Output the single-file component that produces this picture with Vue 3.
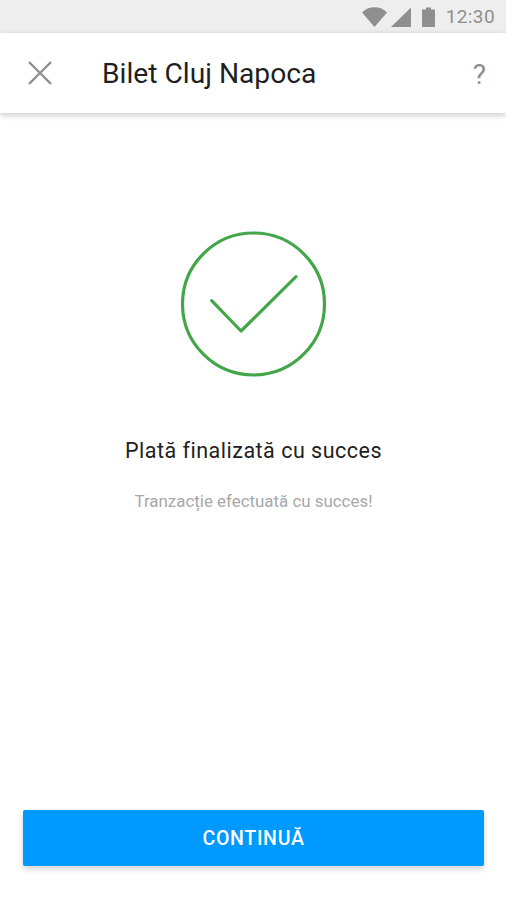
<template>
  <div class="screen">
    <div class="status-bar">
      <svg class="wifi" width="25" height="20" viewBox="0 0 25 20">
        <path d="M0 5.500C3.500 2.200 7.500 0.300 12.500 0.300S21.500 2.200 25 5.500L12.500 20z" fill="#8f8f8f" />
      </svg>
      <svg class="signal" width="20" height="20" viewBox="0 0 20 20">
        <path d="M0 20L20 0.500V20z" fill="#8f8f8f" />
      </svg>
      <svg class="battery" width="13" height="20" viewBox="0 0 13 20">
        <path d="M0 2.500h4V0.500h5V2.500h4V20H0z" fill="#8f8f8f" />
      </svg>
      <span class="clock">12:30</span>
    </div>

    <header class="toolbar">
      <button class="icon-btn" type="button">
        <svg width="24" height="24" viewBox="0 0 24 24">
          <path d="M1 1L23 23M23 1L1 23" stroke="#8e8e8e" stroke-width="2.400" fill="none" />
        </svg>
      </button>
      <h1 class="title">Bilet Cluj Napoca</h1>
      <span class="help">?</span>
    </header>

    <main class="content">
      <svg class="check" width="146" height="146" viewBox="0 0 146 146">
        <circle cx="72.500" cy="73" r="71" fill="none" stroke="#43a648" stroke-width="3.200" />
        <path d="M30.700 69.700L60 100L115 45.700" fill="none" stroke="#43a648" stroke-width="3.200" stroke-linecap="round" stroke-linejoin="round" />
      </svg>
      <h2 class="result-title">Plată finalizată cu succes</h2>
      <p class="result-desc">Tranzacție efectuată cu succes!</p>
    </main>

    <footer class="footer">
      <button class="primary-btn" type="button">CONTINUĂ</button>
    </footer>
  </div>
</template>

<script setup>
</script>

<style scoped>
.screen {
  width: 506px;
  height: 900px;
  display: flex;
  flex-direction: column;
  background: #ffffff;
  font-family: Roboto, 'Liberation Sans', sans-serif;
  overflow: hidden;
}

.status-bar {
  height: 33px;
  flex: none;
  display: flex;
  align-items: center;
  justify-content: flex-end;
  background: #eeeeee;
  padding-right: 11px;
}

.wifi {
  margin-right: 4px;
}

.signal {
  margin-right: 11px;
}

.battery {
  margin-right: 11px;
}

.clock {
  font-size: 19px;
  letter-spacing: 0.4px;
  color: #8f8f8f;
}

.toolbar {
  height: 80px;
  flex: none;
  display: flex;
  align-items: center;
  background: #ffffff;
  box-shadow: 0 2px 6px rgba(0, 0, 0, 0.22);
  position: relative;
}

.icon-btn {
  width: 102px;
  height: 80px;
  flex: none;
  border: none;
  background: none;
  padding: 0 0 0 28px;
  display: flex;
  align-items: center;
}

.title {
  flex: 1;
  margin: 0;
  font-size: 28.200px;
  font-weight: 400;
  color: #1f1f1f;
}

.help {
  font-size: 28px;
  color: #8e8e8e;
  padding: 2px 20px 0 0;
}

.content {
  flex: 1;
  display: flex;
  flex-direction: column;
  align-items: center;
  padding: 118px 0 0 1px;
}

.result-title {
  margin: 61px 0 0;
  font-size: 21.500px;
  font-weight: 400;
  letter-spacing: 0.5px;
  color: #212121;
}

.result-desc {
  margin: 28px 0 0;
  font-size: 16.900px;
  color: #a8a8a8;
}

.footer {
  flex: none;
  padding: 0 22px 34px 23px;
}

.primary-btn {
  width: 100%;
  height: 56px;
  display: block;
  border: none;
  border-radius: 2px;
  background: #0099ff;
  color: #ffffff;
  font-family: inherit;
  font-size: 19.500px;
  font-weight: 500;
  letter-spacing: 0.7px;
  box-shadow: 0 3px 6px rgba(0, 0, 0, 0.18);
}
</style>

<style>
body {
  background: #ffffff;
}
</style>
